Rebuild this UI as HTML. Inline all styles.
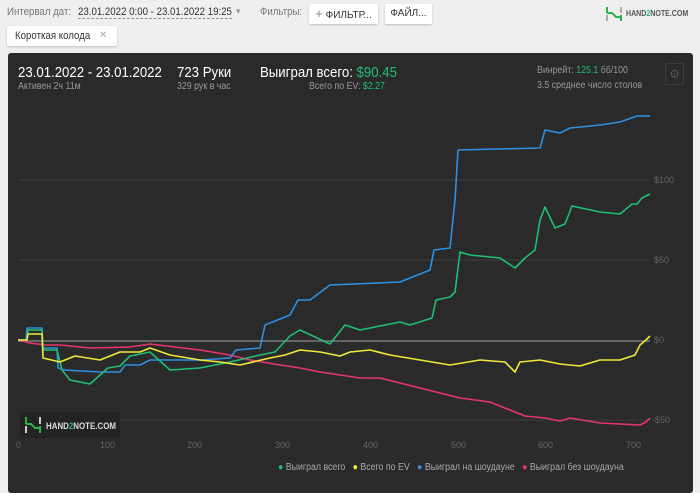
<!DOCTYPE html><html><head><meta charset="utf-8"><style>
body{margin:0;width:700px;height:483px;background:#efefef;font-family:"Liberation Sans",sans-serif;position:relative;overflow:hidden}
.a{position:absolute;white-space:nowrap;transform-origin:0 0}
.n{transform:scaleX(.88)}
.btn{position:absolute;background:#fff;border-radius:2px;box-shadow:0 1px 2px rgba(0,0,0,.2);font-size:10px;color:#333;top:4px;height:20px;line-height:20px}
.g{color:#1fbf73}
</style></head><body>
<div class="a n" style="left:7px;top:6px;font-size:11px;color:#777">Интервал дат:</div>
<div class="a n" style="left:78px;top:6px;font-size:11px;color:#333;border-bottom:1px dashed #888">23.01.2022 0:00 - 23.01.2022 19:25</div>
<div class="a" style="left:236px;top:6px;font-size:9px;color:#999">▾</div>
<div class="a n" style="left:260px;top:6px;font-size:11px;color:#777">Фильтры:</div>
<div class="btn" style="left:309px;width:69px;text-align:center"><span style="color:#888;font-size:13px">+</span> ФИЛЬТР...</div>
<div class="btn" style="left:385px;width:47px;text-align:center">ФАЙЛ...</div>
<svg class="a" style="left:605px;top:6px" width="18" height="16"><path d="M2 1v6M2 7h5l4 4h5M16 9v6" stroke="#2db34a" stroke-width="2" fill="none"/><path d="M2 9v6M16 1v6" stroke="#aaa" stroke-width="2"/></svg>
<div class="a n" style="left:626px;top:9px;font-size:8px;font-weight:bold;color:#555">HAND<span class="g">2</span>NOTE.COM</div>
<div class="btn" style="left:7px;top:26px;width:110px;height:20px"><span class="a n" style="left:8px;top:0;font-size:11px">Короткая колода</span><span class="a" style="left:92px;top:0;color:#aaa">✕</span></div>
<div class="a" style="left:8px;top:53px;width:685px;height:440px;background:#2a2a2a;border-radius:3px"></div>
<div class="a n" style="left:18px;top:64px;font-size:15px;color:#fff">23.01.2022 - 23.01.2022</div>
<div class="a n" style="left:18px;top:81px;font-size:10px;color:#999">Активен 2ч 11м</div>
<div class="a n" style="left:177px;top:64px;font-size:15px;color:#fff">723 Руки</div>
<div class="a n" style="left:177px;top:81px;font-size:10px;color:#999">329 рук в час</div>
<div class="a n" style="left:260px;top:64px;font-size:15px;color:#fff">Выиграл всего: <span class="g">$90.45</span></div>
<div class="a n" style="left:309px;top:81px;font-size:10px;color:#999">Всего по EV: <span class="g">$2.27</span></div>
<div class="a n" style="left:537px;top:65px;font-size:10px;color:#999">Винрейт: <span class="g">125.1</span> бб/100</div>
<div class="a n" style="left:537px;top:80px;font-size:10px;color:#999">3.5 среднее число столов</div>
<div class="a" style="left:665px;top:63px;width:17px;height:20px;border:1px solid #3c3c3c;border-radius:2px;color:#555;font-size:12px;text-align:center;line-height:20px">⚙</div>
<svg class="a" style="left:0;top:0" width="700" height="483">
<g stroke="#2f2f2f" stroke-width="1">
<path d="M18 308H650M18 324H650M18 356H650M18 372H650M18 388H650M18 404H650M18 292H650M18 276H650M18 244H650M18 228H650M18 212H650M18 196H650M18 164H650M18 148H650M18 132H650M18 116H650M18 436H650"/>
<path d="M106 100V436M193 100V436M281 100V436M369 100V436M457 100V436M544 100V436M632 100V436"/>
</g>
<g stroke="#3e3e3e"><path d="M18 180H650M18 260H650M18 420H650"/></g>
<path d="M18 341H650" stroke="#666" stroke-width="2"/>
<g font-size="9" fill="#666" font-family="Liberation Sans"><text x="654" y="183">$100</text><text x="654" y="263">$50</text><text x="654" y="343">$0</text><text x="652" y="423">-$50</text>
<text x="16" y="448">0</text><text x="100" y="448">100</text><text x="187" y="448">200</text><text x="275" y="448">300</text><text x="363" y="448">400</text><text x="451" y="448">500</text><text x="538" y="448">600</text><text x="626" y="448">700</text></g>
<g fill="none" stroke-width="1.6" stroke-linejoin="round">
<polyline stroke="#e8336e" points="18,340 30,343 45,345 60,345 90,348 130,347 150,344 175,347 200,350 230,355 250,360 280,365 300,368 320,372 340,375 360,378 380,378 400,383 420,388 440,393 460,398 490,402 510,410 525,416 545,418 560,421 570,418 600,423 620,424 640,425 646,422 650,418"/>
<polyline stroke="#2e8fe0" points="18,340 26,340 27,328 42,328 43,348 57,348 58,368 65,370 100,372 120,372 125,365 140,365 150,360 200,360 230,358 236,350 260,348 265,325 290,315 298,300 310,300 330,285 400,282 430,270 434,250 450,248 455,200 458,150 540,148 545,130 560,133 570,128 600,125 620,122 637,116 650,116"/>
<polyline stroke="#1fbf73" points="18,340 27,340 28,330 42,330 43,350 57,350 62,370 70,380 90,384 100,375 108,368 120,366 130,356 150,352 170,370 200,368 230,362 260,355 275,352 290,336 300,330 330,344 345,325 360,330 400,322 410,325 432,318 436,300 450,297 455,292 460,252 470,255 500,258 515,268 525,258 535,250 540,220 545,207 555,228 565,224 572,206 600,212 620,214 632,204 637,204 642,198 650,194"/>
<polyline stroke="#f0e93a" points="18,340 27,340 28,334 42,334 43,358 60,362 75,356 100,360 120,352 140,352 150,348 170,355 200,360 220,362 240,365 270,358 285,355 300,350 320,352 340,356 350,352 370,350 390,355 420,360 450,365 480,360 505,362 515,372 520,362 540,360 560,364 580,366 600,360 620,360 635,355 640,345 646,340 650,336"/>
</g>
</svg>
<div class="a" style="left:20px;top:412px;width:100px;height:26px;background:#232323"></div>
<svg class="a" style="left:24px;top:416px" width="18" height="18"><path d="M2 1v7M2 8h5l4 4h5M16 10v7" stroke="#2db34a" stroke-width="2" fill="none"/><path d="M2 10v7M16 1v7" stroke="#ccc" stroke-width="2"/></svg>
<div class="a n" style="left:46px;top:421px;font-size:9px;font-weight:bold;color:#ddd">HAND<span class="g">2</span>NOTE.COM</div>
<div class="a n" style="left:278px;top:462px;font-size:10px;color:#aaa"><span class="g">●</span> Выиграл всего &nbsp; <span style="color:#f0e93a">●</span> Всего по EV &nbsp; <span style="color:#2e8fe0">●</span> Выиграл на шоудауне &nbsp; <span style="color:#e8336e">●</span> Выиграл без шоудауна</div>
</body></html>
